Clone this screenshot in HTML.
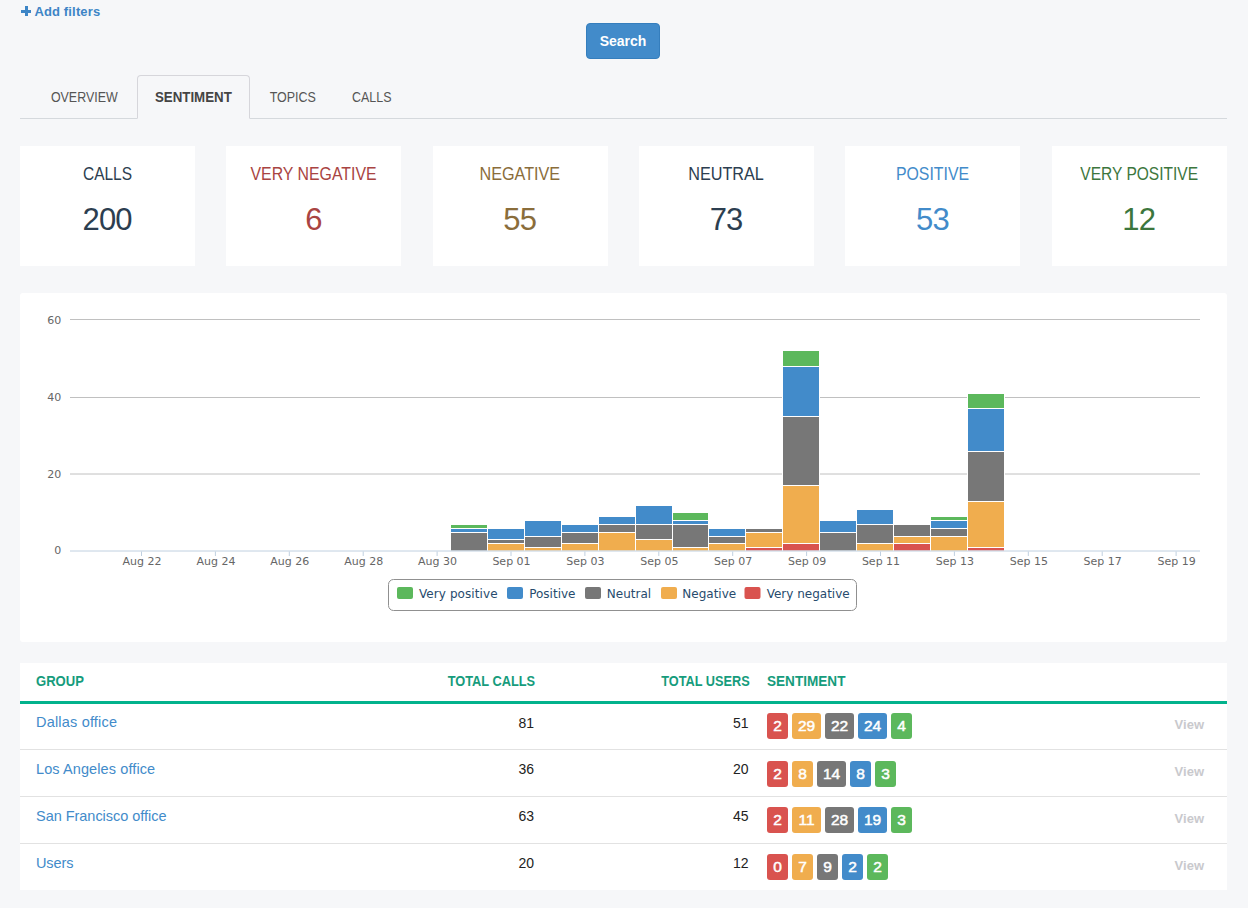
<!DOCTYPE html>
<html lang="en">
<head>
<meta charset="utf-8">
<title>Sentiment</title>
<style>
*{box-sizing:border-box}
html,body{margin:0;padding:0}
body{width:1248px;height:908px;overflow:hidden;background:#f6f7f9;font-family:"Liberation Sans",sans-serif;font-size:14px;line-height:22px;color:#333;position:relative}
a{text-decoration:none;color:#428bca}
.addf{position:absolute;left:21px;top:1px;height:22px;line-height:22px;font-size:13px;font-weight:bold;color:#3d85c6;letter-spacing:.15px;white-space:nowrap}
.addf .plus{display:inline-block;position:relative;width:10px;height:10px;margin-right:3.4px;vertical-align:0px}
.addf .plus:before{content:"";position:absolute;left:0;top:3.5px;width:10px;height:3px;background:#3d85c6}
.addf .plus:after{content:"";position:absolute;left:3.5px;top:0;width:3px;height:10px;background:#3d85c6}
.search{position:absolute;left:586px;top:23px;width:74px;height:36px;border:1px solid #357ebd;border-radius:4px;background:#428bca;color:#fff;font:bold 14px/34px "Liberation Sans",sans-serif;padding:0;text-align:center}
ul.tabs{position:absolute;left:20px;top:75px;width:1207px;height:44px;margin:0;padding:0 0 0 14px;list-style:none;border-bottom:1px solid #d5d9dd}
ul.tabs li{float:left;margin:0 2px -1px 0;height:44px}
ul.tabs li a{display:block;height:44px;padding:10px 0;border:1px solid transparent;border-radius:4px 4px 0 0;color:#555;font-size:15px;line-height:22px;white-space:nowrap;text-align:center}
ul.tabs li.active a{border-color:#d6d6db;border-bottom-color:#f6f7f9;background:#f6f7f9;color:#444;font-weight:bold}
.cards{position:absolute;left:0;top:146px;width:1248px;height:120px}
.card{position:absolute;top:0;width:175px;height:120px;background:#fff;text-align:center;color:#2c3e50}
.card h4{margin:0;position:absolute;left:0;right:0;top:17px;font-size:18px;line-height:22px;font-weight:normal;white-space:nowrap}
.card h2{margin:0;position:absolute;left:0;right:0;top:56px;font-size:31px;line-height:36px;font-weight:normal;letter-spacing:-.8px;text-indent:-.8px}
.sx{display:inline-block;transform:scaleX(var(--k));transform-origin:50% 50%;letter-spacing:0}
.sx.l{transform-origin:0 50%}
.sx.r{transform-origin:100% 50%}
.c-danger{color:#a94442} .c-warning{color:#8a6d3b} .c-primary{color:#428bca} .c-success{color:#3c763d}
.panel{position:absolute;left:20px;top:293px;width:1207px;height:349px;background:#fff;border-radius:3px}
.panel svg{display:block}
.panel svg text{font-family:"DejaVu Sans","Liberation Sans",sans-serif}
table.grid{position:absolute;left:20px;top:662.6px;width:1207px;border-collapse:separate;border-spacing:0;background:#fff;table-layout:fixed}
table.grid th{height:41px;padding:7.3px 8px 8.7px;text-align:left;vertical-align:top;border-bottom:3px solid #02b28c;color:#169c7c;font-size:14.5px;line-height:22px;font-weight:bold;white-space:nowrap}
table.grid td{height:46.9px;padding:8px;vertical-align:top;border-top:1px solid #e2e2e2;line-height:22px;white-space:nowrap}
table.grid tbody tr:first-child td{border-top:0;height:45.9px}
table.grid .num{text-align:right;color:#222}
table.grid td.num{padding-right:9.5px}
table.grid th.num{color:#169c7c;padding-right:8.5px}
table.grid td:first-child,table.grid th:first-child{padding-left:16px}
table.grid td:last-child{padding-right:23px}
table.grid td:nth-child(4){padding-left:9px;font-size:0}
table.grid th:nth-child(4){padding-left:8.7px}
.badge{display:inline-block;height:26px;width:21.3px;padding:0;margin-right:3.7px;border-radius:3px;color:#fff;font-weight:normal;-webkit-text-stroke:.5px #fff;font-size:15.5px;line-height:25px;text-align:center;vertical-align:top;margin-top:1.5px}
.badge.w2{width:29.3px}
table.grid tr:nth-child(2) .badge{margin-top:2.3px}
.b1{background:#d9534f} .b2{background:#f0ad4e} .b3{background:#777} .b4{background:#428bca} .b5{background:#5cb85c}
.gl{font-size:14.5px;position:relative;top:-.5px}
.view{font-size:13px;font-weight:bold;color:#c9c9cd;position:relative;top:1.5px}
</style>
</head>
<body>
<a class="addf" href="#"><span class="plus"></span>Add filters</a>
<button class="search" type="button">Search</button>
<ul class="tabs">
<li><a href="#" style="width:101px"><span class="sx" style="--k:.828">OVERVIEW</span></a></li>
<li class="active"><a href="#" style="width:113px"><span class="sx" style="--k:.887">SENTIMENT</span></a></li>
<li><a href="#" style="width:81px"><span class="sx" style="--k:.833">TOPICS</span></a></li>
<li><a href="#" style="width:73px"><span class="sx" style="--k:.828">CALLS</span></a></li>
</ul>
<div class="cards">
<div class="card" style="left:20px"><h4><span class="sx" style="--k:0.86">CALLS</span></h4><h2>200</h2></div>
<div class="card c-danger" style="left:226.33px"><h4><span class="sx" style="--k:0.881">VERY NEGATIVE</span></h4><h2>6</h2></div>
<div class="card c-warning" style="left:432.67px"><h4><span class="sx" style="--k:0.899">NEGATIVE</span></h4><h2>55</h2></div>
<div class="card" style="left:639px"><h4><span class="sx" style="--k:0.9">NEUTRAL</span></h4><h2>73</h2></div>
<div class="card c-primary" style="left:845.33px"><h4><span class="sx" style="--k:0.881">POSITIVE</span></h4><h2>53</h2></div>
<div class="card c-success" style="left:1051.67px"><h4><span class="sx" style="--k:0.863">VERY POSITIVE</span></h4><h2>12</h2></div>
</div>
<div class="panel">
<svg width="1207" height="349" viewBox="20 293 1207 349">
<g stroke="#c0c0c0" stroke-width="1" fill="none">
<path d="M70 319.5H1200"/><path d="M70 397.5H1200"/><path d="M70 474H1200"/>
</g>
<g class="bars" shape-rendering="auto">
<rect x="450.5" y="532.5" width="37.0" height="18.50" fill="#777777" stroke="#fff" stroke-width="1"/>
<rect x="450.5" y="528.5" width="37.0" height="4.00" fill="#428bca" stroke="#fff" stroke-width="1"/>
<rect x="450.5" y="524.5" width="37.0" height="4.00" fill="#5cb85c" stroke="#fff" stroke-width="1"/>
<rect x="487.5" y="543.5" width="37.0" height="7.50" fill="#f0ad4e" stroke="#fff" stroke-width="1"/>
<rect x="487.5" y="539.5" width="37.0" height="4.00" fill="#777777" stroke="#fff" stroke-width="1"/>
<rect x="487.5" y="528.5" width="37.0" height="11.00" fill="#428bca" stroke="#fff" stroke-width="1"/>
<rect x="524.5" y="547.5" width="37.0" height="3.50" fill="#f0ad4e" stroke="#fff" stroke-width="1"/>
<rect x="524.5" y="536.5" width="37.0" height="11.00" fill="#777777" stroke="#fff" stroke-width="1"/>
<rect x="524.5" y="520.5" width="37.0" height="16.00" fill="#428bca" stroke="#fff" stroke-width="1"/>
<rect x="561.5" y="543.5" width="37.0" height="7.50" fill="#f0ad4e" stroke="#fff" stroke-width="1"/>
<rect x="561.5" y="532.5" width="37.0" height="11.00" fill="#777777" stroke="#fff" stroke-width="1"/>
<rect x="561.5" y="524.5" width="37.0" height="8.00" fill="#428bca" stroke="#fff" stroke-width="1"/>
<rect x="598.5" y="532.5" width="37.0" height="18.50" fill="#f0ad4e" stroke="#fff" stroke-width="1"/>
<rect x="598.5" y="524.5" width="37.0" height="8.00" fill="#777777" stroke="#fff" stroke-width="1"/>
<rect x="598.5" y="516.5" width="37.0" height="8.00" fill="#428bca" stroke="#fff" stroke-width="1"/>
<rect x="635.5" y="539.5" width="37.0" height="11.50" fill="#f0ad4e" stroke="#fff" stroke-width="1"/>
<rect x="635.5" y="524.5" width="37.0" height="15.00" fill="#777777" stroke="#fff" stroke-width="1"/>
<rect x="635.5" y="505.5" width="37.0" height="19.00" fill="#428bca" stroke="#fff" stroke-width="1"/>
<rect x="672.5" y="547.5" width="36.0" height="3.50" fill="#f0ad4e" stroke="#fff" stroke-width="1"/>
<rect x="672.5" y="524.5" width="36.0" height="23.00" fill="#777777" stroke="#fff" stroke-width="1"/>
<rect x="672.5" y="520.5" width="36.0" height="4.00" fill="#428bca" stroke="#fff" stroke-width="1"/>
<rect x="672.5" y="512.5" width="36.0" height="8.00" fill="#5cb85c" stroke="#fff" stroke-width="1"/>
<rect x="708.5" y="543.5" width="37.0" height="7.50" fill="#f0ad4e" stroke="#fff" stroke-width="1"/>
<rect x="708.5" y="536.5" width="37.0" height="7.00" fill="#777777" stroke="#fff" stroke-width="1"/>
<rect x="708.5" y="528.5" width="37.0" height="8.00" fill="#428bca" stroke="#fff" stroke-width="1"/>
<rect x="745.5" y="547.5" width="37.0" height="3.50" fill="#d9534f" stroke="#fff" stroke-width="1"/>
<rect x="745.5" y="532.5" width="37.0" height="15.00" fill="#f0ad4e" stroke="#fff" stroke-width="1"/>
<rect x="745.5" y="528.5" width="37.0" height="4.00" fill="#777777" stroke="#fff" stroke-width="1"/>
<rect x="782.5" y="543.5" width="37.0" height="7.50" fill="#d9534f" stroke="#fff" stroke-width="1"/>
<rect x="782.5" y="485.5" width="37.0" height="58.00" fill="#f0ad4e" stroke="#fff" stroke-width="1"/>
<rect x="782.5" y="416.5" width="37.0" height="69.00" fill="#777777" stroke="#fff" stroke-width="1"/>
<rect x="782.5" y="366.5" width="37.0" height="50.00" fill="#428bca" stroke="#fff" stroke-width="1"/>
<rect x="782.5" y="350.5" width="37.0" height="16.00" fill="#5cb85c" stroke="#fff" stroke-width="1"/>
<rect x="819.5" y="532.5" width="37.0" height="18.50" fill="#777777" stroke="#fff" stroke-width="1"/>
<rect x="819.5" y="520.5" width="37.0" height="12.00" fill="#428bca" stroke="#fff" stroke-width="1"/>
<rect x="856.5" y="543.5" width="37.0" height="7.50" fill="#f0ad4e" stroke="#fff" stroke-width="1"/>
<rect x="856.5" y="524.5" width="37.0" height="19.00" fill="#777777" stroke="#fff" stroke-width="1"/>
<rect x="856.5" y="509.5" width="37.0" height="15.00" fill="#428bca" stroke="#fff" stroke-width="1"/>
<rect x="893.5" y="543.5" width="37.0" height="7.50" fill="#d9534f" stroke="#fff" stroke-width="1"/>
<rect x="893.5" y="536.5" width="37.0" height="7.00" fill="#f0ad4e" stroke="#fff" stroke-width="1"/>
<rect x="893.5" y="524.5" width="37.0" height="12.00" fill="#777777" stroke="#fff" stroke-width="1"/>
<rect x="930.5" y="536.5" width="37.0" height="14.50" fill="#f0ad4e" stroke="#fff" stroke-width="1"/>
<rect x="930.5" y="528.5" width="37.0" height="8.00" fill="#777777" stroke="#fff" stroke-width="1"/>
<rect x="930.5" y="520.5" width="37.0" height="8.00" fill="#428bca" stroke="#fff" stroke-width="1"/>
<rect x="930.5" y="516.5" width="37.0" height="4.00" fill="#5cb85c" stroke="#fff" stroke-width="1"/>
<rect x="967.5" y="547.5" width="37.0" height="3.50" fill="#d9534f" stroke="#fff" stroke-width="1"/>
<rect x="967.5" y="501.5" width="37.0" height="46.00" fill="#f0ad4e" stroke="#fff" stroke-width="1"/>
<rect x="967.5" y="451.5" width="37.0" height="50.00" fill="#777777" stroke="#fff" stroke-width="1"/>
<rect x="967.5" y="408.5" width="37.0" height="43.00" fill="#428bca" stroke="#fff" stroke-width="1"/>
<rect x="967.5" y="393.5" width="37.0" height="15.00" fill="#5cb85c" stroke="#fff" stroke-width="1"/>
</g>
<path d="M70 551H1200" stroke="#c0d0e0" stroke-width="1" fill="none"/>
<path d="M141.50 551.5V556" stroke="#c0d0e0" stroke-width="1" fill="none"/>
<path d="M215.40 551.5V556" stroke="#c0d0e0" stroke-width="1" fill="none"/>
<path d="M289.30 551.5V556" stroke="#c0d0e0" stroke-width="1" fill="none"/>
<path d="M363.20 551.5V556" stroke="#c0d0e0" stroke-width="1" fill="none"/>
<path d="M437.10 551.5V556" stroke="#c0d0e0" stroke-width="1" fill="none"/>
<path d="M511.00 551.5V556" stroke="#c0d0e0" stroke-width="1" fill="none"/>
<path d="M584.90 551.5V556" stroke="#c0d0e0" stroke-width="1" fill="none"/>
<path d="M658.80 551.5V556" stroke="#c0d0e0" stroke-width="1" fill="none"/>
<path d="M732.70 551.5V556" stroke="#c0d0e0" stroke-width="1" fill="none"/>
<path d="M806.60 551.5V556" stroke="#c0d0e0" stroke-width="1" fill="none"/>
<path d="M880.50 551.5V556" stroke="#c0d0e0" stroke-width="1" fill="none"/>
<path d="M954.40 551.5V556" stroke="#c0d0e0" stroke-width="1" fill="none"/>
<path d="M1028.30 551.5V556" stroke="#c0d0e0" stroke-width="1" fill="none"/>
<path d="M1102.20 551.5V556" stroke="#c0d0e0" stroke-width="1" fill="none"/>
<path d="M1176.10 551.5V556" stroke="#c0d0e0" stroke-width="1" fill="none"/>
<g font-size="11px" fill="#666">
<text x="142.00" y="564.8" text-anchor="middle">Aug 22</text>
<text x="215.90" y="564.8" text-anchor="middle">Aug 24</text>
<text x="289.80" y="564.8" text-anchor="middle">Aug 26</text>
<text x="363.70" y="564.8" text-anchor="middle">Aug 28</text>
<text x="437.60" y="564.8" text-anchor="middle">Aug 30</text>
<text x="511.50" y="564.8" text-anchor="middle">Sep 01</text>
<text x="585.40" y="564.8" text-anchor="middle">Sep 03</text>
<text x="659.30" y="564.8" text-anchor="middle">Sep 05</text>
<text x="733.20" y="564.8" text-anchor="middle">Sep 07</text>
<text x="807.10" y="564.8" text-anchor="middle">Sep 09</text>
<text x="881.00" y="564.8" text-anchor="middle">Sep 11</text>
<text x="954.90" y="564.8" text-anchor="middle">Sep 13</text>
<text x="1028.80" y="564.8" text-anchor="middle">Sep 15</text>
<text x="1102.70" y="564.8" text-anchor="middle">Sep 17</text>
<text x="1176.60" y="564.8" text-anchor="middle">Sep 19</text>
</g>
<g font-size="11px" fill="#666" text-anchor="end">
<text x="61.3" y="324">60</text><text x="61.3" y="400.9">40</text><text x="61.3" y="477.6">20</text><text x="61.3" y="554.4">0</text>
</g>
<rect x="388.5" y="579.5" width="468" height="31" rx="5" ry="5" fill="#fff" stroke="#909090" stroke-width="1"/>
<g font-size="12px" fill="#274b6d">
<rect x="397" y="587" width="16" height="12" rx="2" fill="#5cb85c"/><text x="419" y="598" letter-spacing=".08">Very positive</text>
<rect x="507" y="587" width="16" height="12" rx="2" fill="#428bca"/><text x="529.2" y="598">Positive</text>
<rect x="585" y="587" width="16" height="12" rx="2" fill="#777"/><text x="606.8" y="598">Neutral</text>
<rect x="661" y="587" width="16" height="12" rx="2" fill="#f0ad4e"/><text x="682.3" y="598">Negative</text>
<rect x="744.5" y="587" width="16" height="12" rx="2" fill="#d9534f"/><text x="766.7" y="598">Very negative</text>
</g>
</svg>
</div>
<table class="grid">
<colgroup><col style="width:309px"><col style="width:214.5px"><col style="width:214.5px"><col style="width:330px"><col></colgroup>
<thead><tr><th><span class="sx l" style="--k:.902">GROUP</span></th><th class="num"><span class="sx r" style="--k:.882">TOTAL CALLS</span></th><th class="num"><span class="sx r" style="--k:.878">TOTAL USERS</span></th><th><span class="sx l" style="--k:.936">SENTIMENT</span></th><th></th></tr></thead>
<tbody>
<tr><td><a class="gl" href="#" style="letter-spacing:0.19px">Dallas office</a></td><td class="num">81</td><td class="num">51</td><td><span class="badge b1">2</span><span class="badge b2 w2">29</span><span class="badge b3 w2">22</span><span class="badge b4 w2">24</span><span class="badge b5">4</span></td><td class="num"><a class="view" href="#">View</a></td></tr>
<tr><td><a class="gl" href="#" style="letter-spacing:0.1px">Los Angeles office</a></td><td class="num">36</td><td class="num">20</td><td><span class="badge b1">2</span><span class="badge b2">8</span><span class="badge b3 w2">14</span><span class="badge b4">8</span><span class="badge b5">3</span></td><td class="num"><a class="view" href="#">View</a></td></tr>
<tr><td><a class="gl" href="#" style="letter-spacing:-0.03px">San Francisco office</a></td><td class="num">63</td><td class="num">45</td><td><span class="badge b1">2</span><span class="badge b2 w2">11</span><span class="badge b3 w2">28</span><span class="badge b4 w2">19</span><span class="badge b5">3</span></td><td class="num"><a class="view" href="#">View</a></td></tr>
<tr><td><a class="gl" href="#" style="letter-spacing:-0.1px">Users</a></td><td class="num">20</td><td class="num">12</td><td><span class="badge b1">0</span><span class="badge b2">7</span><span class="badge b3">9</span><span class="badge b4">2</span><span class="badge b5">2</span></td><td class="num"><a class="view" href="#">View</a></td></tr>
</tbody>
</table>
</body>
</html>
